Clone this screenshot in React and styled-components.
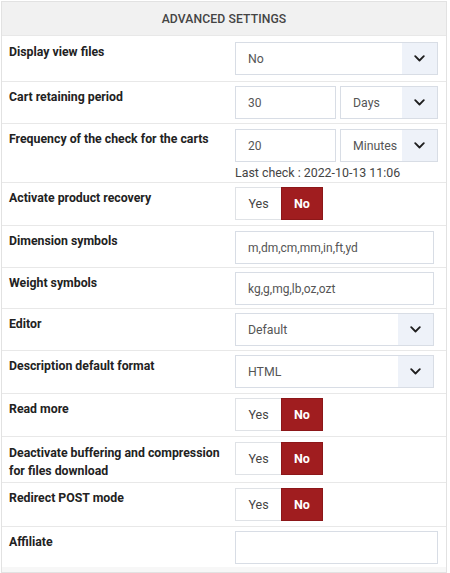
import React from 'react';
import styled, { createGlobalStyle } from 'styled-components';

const GlobalStyle = createGlobalStyle`
  html, body { margin: 0; padding: 0; background: #fff; }
  body { font-family: Roboto, "Liberation Sans", sans-serif; }
`;

const Panel = styled.div`
  margin: 1px 0 0 1px;
  width: 444px;
  border: 1px solid #e2e2e2;
  background: #fff;
`;

const Header = styled.div`
  background: #f1f1f1;
  height: 33px;
  display: flex;
  align-items: center;
  justify-content: center;
  font-size: 12.2px;
  font-weight: 500;
  color: #444;
  letter-spacing: 0.1px;
`;

const Row = styled.div`
  display: grid;
  grid-template-columns: 226px 1fr;
  align-items: start;
  padding: ${(p) => p.$pt || 4}px 8px 0 7px;
  border-top: 1px solid #e8e8e8;
  height: ${(p) => p.$h}px;
  box-sizing: border-box;
`;

const Label = styled.div`
  font-size: 12.3px;
  font-weight: 700;
  color: #222;
  line-height: ${(p) => (p.$wrap ? 18 : 20)}px;
  margin-top: ${(p) => p.$top ?? 1}px;
`;

const Control = styled.div`
  display: flex;
  flex-direction: column;
`;

const Line = styled.div`
  display: flex;
  gap: 4px;
`;

const TextInput = styled.div`
  box-sizing: border-box;
  width: ${(p) => p.$w}px;
  height: 33px;
  border: 1px solid #d8dde5;
  display: flex;
  align-items: center;
  padding-left: 12px;
  font-size: 12px;
  color: #555;
  background: #fff;
`;

const SelectBox = styled.div`
  box-sizing: border-box;
  width: ${(p) => p.$w}px;
  height: 33px;
  border: 1px solid #d8dde5;
  display: flex;
  align-items: stretch;
  font-size: 12.3px;
  color: #555;
  background: #fff;
`;

const SelectValue = styled.div`
  flex: 1;
  display: flex;
  align-items: center;
  padding-left: 12px;
`;

const Arrow = styled.div`
  width: 35px;
  background: #eef2f9;
  display: flex;
  align-items: center;
  justify-content: center;
`;

const Hint = styled.div`
  font-size: 12.4px;
  color: #444;
  margin-top: 3px;
  line-height: 16px;
`;

const Toggle = styled.div`
  display: flex;
  height: 33px;
`;

const ToggleBtn = styled.div`
  box-sizing: border-box;
  width: ${(p) => (p.$on ? 42 : 46)}px;
  display: flex;
  align-items: center;
  justify-content: center;
  font-size: 12.5px;
  font-weight: ${(p) => (p.$on ? 700 : 400)};
  color: ${(p) => (p.$on ? '#fff' : '#444')};
  background: ${(p) => (p.$on ? '#a01d1f' : '#fff')};
  border: 1px solid ${(p) => (p.$on ? '#8c1719' : '#dfe2e6')};
  border-right-width: ${(p) => (p.$on ? 1 : 0)}px;
`;

const Footer = styled.div`
  height: 5px;
  background: #f7f7f7;
`;

const Chevron = () => (
  <svg width="11" height="7" viewBox="0 0 11 7" fill="none">
    <path d="M1.2 1.2 L5.5 5.5 L9.8 1.2" stroke="#1e1e1e" strokeWidth="1.8" strokeLinecap="round" strokeLinejoin="round" />
  </svg>
);

const Select = ({ value, w }) => (
  <SelectBox $w={w}>
    <SelectValue>{value}</SelectValue>
    <Arrow>
      <Chevron />
    </Arrow>
  </SelectBox>
);

const YesNo = () => (
  <Toggle>
    <ToggleBtn>Yes</ToggleBtn>
    <ToggleBtn $on>No</ToggleBtn>
  </Toggle>
);

export default function App() {
  return (
    <>
      <GlobalStyle />
      <Panel>
        <Header>ADVANCED SETTINGS</Header>
        <Row $h={46} $pt={6}>
          <Label $top={0}>Display view files</Label>
          <Control>
            <Select value="No" w={203} />
          </Control>
        </Row>
        <Row $h={42}>
          <Label>Cart retaining period</Label>
          <Control>
            <Line>
              <TextInput $w={101}>30</TextInput>
              <Select value="Days" w={98} />
            </Line>
          </Control>
        </Row>
        <Row $h={59} $pt={5}>
          <Label $top={0}>Frequency of the check for the carts</Label>
          <Control>
            <Line>
              <TextInput $w={101}>20</TextInput>
              <Select value="Minutes" w={98} />
            </Line>
            <Hint>Last check : 2022-10-13 11:06</Hint>
          </Control>
        </Row>
        <Row $h={43}>
          <Label>Activate product recovery</Label>
          <Control>
            <YesNo />
          </Control>
        </Row>
        <Row $h={42} $pt={5}>
          <Label $top={0}>Dimension symbols</Label>
          <Control>
            <TextInput $w={199}>m,dm,cm,mm,in,ft,yd</TextInput>
          </Control>
        </Row>
        <Row $h={41}>
          <Label>Weight symbols</Label>
          <Control>
            <TextInput $w={199}>kg,g,mg,lb,oz,ozt</TextInput>
          </Control>
        </Row>
        <Row $h={42}>
          <Label>Editor</Label>
          <Control>
            <Select value="Default" w={199} />
          </Control>
        </Row>
        <Row $h={43}>
          <Label>Description default format</Label>
          <Control>
            <Select value="HTML" w={199} />
          </Control>
        </Row>
        <Row $h={43}>
          <Label>Read more</Label>
          <Control>
            <YesNo />
          </Control>
        </Row>
        <Row $h={46} $pt={5}>
          <Label $top={2} $wrap>Deactivate buffering and compression for files download</Label>
          <Control>
            <YesNo />
          </Control>
        </Row>
        <Row $h={44} $pt={5}>
          <Label $top={0}>Redirect POST mode</Label>
          <Control>
            <YesNo />
          </Control>
        </Row>
        <Row $h={41}>
          <Label>Affiliate</Label>
          <Control>
            <TextInput $w={203} />
          </Control>
        </Row>
        <Footer />
      </Panel>
    </>
  );
}
